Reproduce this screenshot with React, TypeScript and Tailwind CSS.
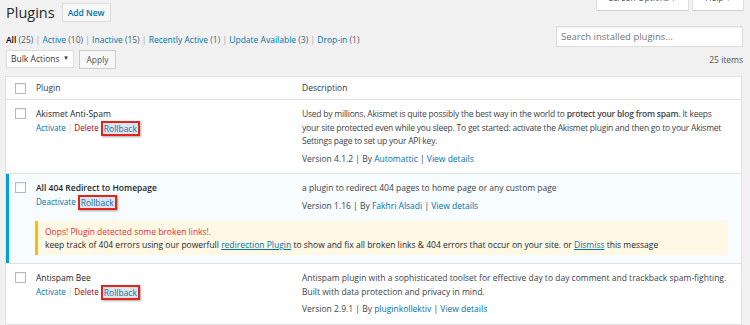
import React from 'react';

type RowProps = {
  title: string;
  active?: boolean;
  primary: string;
  showDelete?: boolean;
  description: React.ReactNode;
  version: string;
  author: string;
  notice?: React.ReactNode;
};

function Checkbox() {
  return (
    <div className="w-[11px] h-[11px] border border-[#b4b9be] bg-white shadow-[inset_0_1px_2px_rgba(0,0,0,0.07)]" />
  );
}

function Rollback() {
  return (
    <span className="inline-block border-2 border-[#e0261c] shadow-[1px_1px_2px_rgba(0,0,0,0.35)] px-[1px] leading-[11px] bg-[#dbe6ef] text-[#2c6d9e] text-[8.5px]">
      Rollback
    </span>
  );
}

function PluginRow({ title, active, primary, showDelete, description, version, author, notice }: RowProps) {
  return (
    <div
      className={
        active
          ? 'border-t border-[#e1e1e1] bg-[#f7fcfe] shadow-[inset_3px_0_0_#00a0d2] pt-[7px] pb-[8px]'
          : 'border-t border-[#e1e1e1] bg-white pt-[7px] pb-[8px]'
      }
    >
      <div className="grid grid-cols-[26px_266px_1fr]">
        <div className="pl-[9px] pt-[1px]">
          <Checkbox />
        </div>
        <div className="pl-[4px]">
          <div className={active ? 'font-semibold text-[#23282d]' : 'text-[#23282d]'}>{title}</div>
          <div className="flex items-center gap-[2px] text-[8.1px]">
            <span className="text-[#0073aa]">{primary}</span>
            {showDelete && (
              <>
                <span className="text-[#ccc]">|</span>
                <span className="text-[#a00]">Delete</span>
              </>
            )}
            <Rollback />
          </div>
        </div>
        <div className="pl-[4px] text-[#3c434a] whitespace-nowrap">
          <div>{description}</div>
          <div className="mt-[4px]">
            Version {version} | By <span className="text-[#0073aa]">{author}</span> |{' '}
            <span className="text-[#0073aa]">View details</span>
          </div>
        </div>
      </div>
      {notice && (
        <div className="ml-[29px] mr-[13px] mt-[9px] bg-[#fff8e5] border-l-[3px] border-[#ffb900] pl-[7px] pt-[4px] pb-[4px] leading-[13px] whitespace-nowrap">
          {notice}
        </div>
      )}
    </div>
  );
}

export default function App() {
  return (
    <div className="w-[750px] h-[325px] overflow-hidden bg-[#f1f1f1] font-['Open_Sans',sans-serif] text-[8.5px] leading-[13.5px] text-[#32373c]">
      {/* title row + screen tabs */}
      <div className="flex justify-between h-[26px]">
        <div className="flex items-center gap-[7px] pl-[6px] h-[27px] -mt-[1px]">
          <h1 className="text-[14.5px] leading-[20px] text-[#23282d]">Plugins</h1>
          <div className="h-[19px] px-[5px] flex items-center border border-[#ddd] bg-[#f7f7f7] text-[#0073aa] font-semibold text-[8.5px]">
            Add New
          </div>
        </div>
        <div className="flex gap-[5px] pr-[7px] -mt-[14px]">
          <div className="w-[91px] h-[24px] bg-white shadow-[0_0_0_1px_rgba(0,0,0,0.06),0_1px_1px_rgba(0,0,0,0.08)] flex items-center justify-center text-[#555]">
            Screen Options ▾
          </div>
          <div className="w-[50px] h-[24px] bg-white shadow-[0_0_0_1px_rgba(0,0,0,0.06),0_1px_1px_rgba(0,0,0,0.08)] flex items-center justify-center text-[#555]">
            Help ▾
          </div>
        </div>
      </div>

      {/* filters + search */}
      <div className="flex justify-between">
        <div className="pl-[6px] pt-[7px] leading-[13px]">
          <span className="font-semibold text-black">All</span> <span className="text-[#555d66]">(25)</span>
          <span className="text-[#a0a5aa]"> | </span>
          <span className="text-[#0073aa]">Active</span> <span className="text-[#555d66]">(10)</span>
          <span className="text-[#a0a5aa]"> | </span>
          <span className="text-[#0073aa]">Inactive</span> <span className="text-[#555d66]">(15)</span>
          <span className="text-[#a0a5aa]"> | </span>
          <span className="text-[#0073aa]">Recently Active</span> <span className="text-[#555d66]">(1)</span>
          <span className="text-[#a0a5aa]"> | </span>
          <span className="text-[#0073aa]">Update Available</span> <span className="text-[#555d66]">(3)</span>
          <span className="text-[#a0a5aa]"> | </span>
          <span className="text-[#0073aa]">Drop-in</span> <span className="text-[#555d66]">(1)</span>
        </div>
        <div className="mr-[7px] w-[187px] h-[21px] bg-white border border-[#ddd] shadow-[inset_0_1px_2px_rgba(0,0,0,0.07)] flex items-center pl-[4px] text-[9.5px] text-[#72777c]">
          Search installed plugins...
        </div>
      </div>

      {/* bulk actions */}
      <div className="flex justify-between items-center mt-[3px] pl-[6px] pr-[7px]">
        <div className="flex gap-[5px]">
          <div className="w-[68px] h-[18px] bg-white border border-[#ddd] flex items-center justify-between pl-[4px] pr-[4px] text-[#32373c]">
            <span>Bulk Actions</span>
            <span className="text-[6px]">▼</span>
          </div>
          <div className="w-[37px] h-[19px] bg-[#f7f7f7] border border-[#ccc] flex items-center justify-center text-[#555]">
            Apply
          </div>
        </div>
        <div className="text-[#555]">25 items</div>
      </div>

      {/* table */}
      <div className="ml-[5px] mr-[8px] mt-[7px] border border-[#e1e1e1] bg-white">
        <div className="grid grid-cols-[26px_266px_1fr] h-[22px] items-center">
          <div className="pl-[9px]">
            <Checkbox />
          </div>
          <div className="pl-[4px]">Plugin</div>
          <div className="pl-[4px]">Description</div>
        </div>

        <PluginRow
          title="Akismet Anti-Spam"
          primary="Activate"
          showDelete
          version="4.1.2"
          author="Automattic"
          description={
            <span className="tracking-[-0.22px]">
              Used by millions, Akismet is quite possibly the best way in the world to{' '}
              <span className="font-semibold">protect your blog from spam</span>. It keeps
              <br />
              your site protected even while you sleep. To get started: activate the Akismet plugin and then go to your Akismet
              <br />
              Settings page to set up your API key.
            </span>
          }
        />

        <PluginRow
          title="All 404 Redirect to Homepage"
          active
          primary="Deactivate"
          version="1.16"
          author="Fakhri Alsadi"
          description="a plugin to redirect 404 pages to home page or any custom page"
          notice={
            <>
              <div className="text-[#dc3232]">Oops! Plugin detected some broken links!.</div>
              <div className="text-[#23282d]">
                keep track of 404 errors using our powerfull{' '}
                <span className="text-[#0073aa] underline">redirection Plugin</span> to show and fix all broken links &amp; 404
                errors that occur on your site. or <span className="text-[#0073aa] underline">Dismiss</span> this message
              </div>
            </>
          }
        />

        <PluginRow
          title="Antispam Bee"
          primary="Activate"
          showDelete
          version="2.9.1"
          author="pluginkollektiv"
          description={
            <>
              Antispam plugin with a sophisticated toolset for effective day to day comment and trackback spam-fighting.
              <br />
              Built with data protection and privacy in mind.
            </>
          }
        />
      </div>
    </div>
  );
}
